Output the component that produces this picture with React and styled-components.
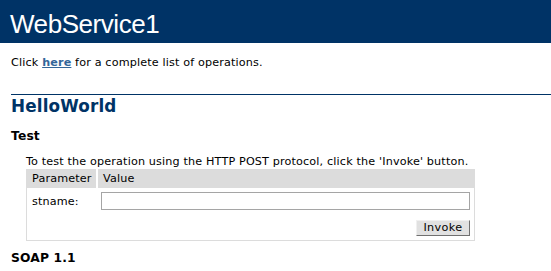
import React from "react";
import styled, { createGlobalStyle } from "styled-components";

const GlobalStyle = createGlobalStyle`
  html, body {
    margin: 0;
    padding: 0;
    background: #ffffff;
    overflow: hidden;
  }
  body {
    color: #000000;
    font-family: "DejaVu Sans", Verdana, sans-serif;
    font-size: 11.2px;
    letter-spacing: 0.15px;
  }
`;

export default function App() {
  return (
    <>
      <GlobalStyle />
      <Header>
        <Title>WebService1</Title>
      </Header>
      <Content>
        <Intro>
          Click <Link href="#">here</Link> for a complete list of operations.
        </Intro>
        <Rule />
        <OpName>HelloWorld</OpName>
        <SubHeading>Test</SubHeading>
        <FormArea>
          <FormText>
            To test the operation using the HTTP POST protocol, click the
            'Invoke' button.
          </FormText>
          <FormTable>
            <HeadRow>
              <HeadCell>Parameter</HeadCell>
              <HeadCell>Value</HeadCell>
            </HeadRow>
            <ParamRow>
              <ParamName>stname:</ParamName>
              <ParamValue>
                <TextInput type="text" />
              </ParamValue>
            </ParamRow>
            <ButtonRow>
              <InvokeButton type="button">Invoke</InvokeButton>
            </ButtonRow>
          </FormTable>
        </FormArea>
        <SubHeading $top={10}>SOAP 1.1</SubHeading>
      </Content>
    </>
  );
}

const Header = styled.div`
  background: #003366;
  height: 43px;
  padding-left: 10px;
  box-sizing: border-box;
`;

const Title = styled.h1`
  margin: 0;
  padding-top: 9px;
  font-family: "Liberation Sans", Arial, sans-serif;
  font-size: 26px;
  font-weight: normal;
  letter-spacing: -0.45px;
  line-height: 30px;
  color: #ffffff;
`;

const Content = styled.div`
  padding-left: 11px;
`;

const Intro = styled.p`
  margin: 13px 0 0 0;
  line-height: 14px;
`;

const Link = styled.a`
  color: #336699;
  font-weight: bold;
  text-decoration: underline;
`;

const Rule = styled.div`
  margin-top: 24px;
  height: 1px;
  background: #003366;
`;

const OpName = styled.h2`
  margin: 1px 0 0 0;
  font-size: 16.8px;
  line-height: 20px;
  font-weight: bold;
  color: #003366;
`;

const SubHeading = styled.h3`
  margin: ${(p) => p.$top ?? 13}px 0 0 0;
  font-size: 12.3px;
  line-height: 15px;
  font-weight: bold;
  color: #000000;
`;

const FormArea = styled.div`
  margin-left: 15px;
  margin-top: 11px;
`;

const FormText = styled.div`
  line-height: 14px;
`;

const FormTable = styled.div`
  width: 449px;
  box-sizing: border-box;
  border: 1px solid #dcdcdc;
  border-top: 0;
`;

const HeadRow = styled.div`
  display: grid;
  grid-template-columns: 69px 1fr;
  column-gap: 2px;
`;

const HeadCell = styled.div`
  background: #dcdcdc;
  height: 19px;
  line-height: 19px;
  padding-left: 5px;
`;

const ParamRow = styled.div`
  display: grid;
  grid-template-columns: 69px 1fr;
  column-gap: 2px;
  padding-top: 4px;
  align-items: center;
`;

const ParamName = styled.div`
  padding-left: 5px;
`;

const ParamValue = styled.div`
  padding-left: 3px;
  padding-right: 4px;
`;

const TextInput = styled.input`
  display: block;
  width: 100%;
  height: 18px;
  box-sizing: border-box;
  margin: 0;
  border: 1px solid #a5a5a5;
  background: #ffffff;
  font-family: "DejaVu Sans", Verdana, sans-serif;
  font-size: 11.2px;
  padding: 0 2px;
`;

const ButtonRow = styled.div`
  display: flex;
  justify-content: flex-end;
  padding: 10px 4px 4px 0;
`;

const InvokeButton = styled.button`
  height: 16px;
  width: 54px;
  box-sizing: border-box;
  margin: 0;
  padding: 0;
  background: #e1e1e1;
  border: 1px solid;
  border-color: #f0f0f0 #707070 #707070 #f0f0f0;
  font-family: "DejaVu Sans", Verdana, sans-serif;
  font-size: 11.2px;
  letter-spacing: 0.4px;
  line-height: 14px;
  color: #000000;
`;
